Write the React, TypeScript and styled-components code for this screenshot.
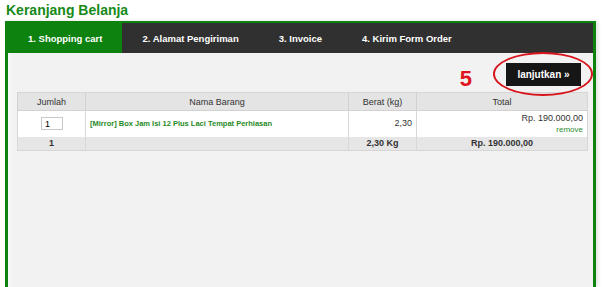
import React from 'react';
import styled, { createGlobalStyle } from 'styled-components';

const GlobalStyle = createGlobalStyle`
  html, body {
    margin: 0;
    padding: 0;
    background: #ffffff;
    overflow: hidden;
  }
  body {
    font-family: "Liberation Sans", Arial, sans-serif;
  }
`;

const tabs = ['1. Shopping cart', '2. Alamat Pengiriman', '3. Invoice', '4. Kirim Form Order'];

const cartItems = [
  { qty: 1, name: '[Mirror] Box Jam Isi 12 Plus Laci Tempat Perhiasan', weight: '2,30', total: 'Rp. 190.000,00' },
];

const App: React.FC = () => {
  return (
    <Page>
      <GlobalStyle />
      <Title>Keranjang Belanja</Title>
      <Frame>
        <TabBar>
          {tabs.map((tab, index) => (
            <Tab key={tab} active={index === 0}>{tab}</Tab>
          ))}
        </TabBar>
        <Content>
          <ActionRow>
            <StepNumber>5</StepNumber>
            <ButtonWrap>
              <NextButton>lanjutkan »</NextButton>
              <Highlight />
            </ButtonWrap>
          </ActionRow>
          <CartTable>
            <colgroup>
              <col style={{ width: 68 }} />
              <col style={{ width: 263 }} />
              <col style={{ width: 68 }} />
              <col style={{ width: 171 }} />
            </colgroup>
            <thead>
              <HeadRow>
                <Th>Jumlah</Th>
                <Th>Nama Barang</Th>
                <Th>Berat (kg)</Th>
                <Th>Total</Th>
              </HeadRow>
            </thead>
            <tbody>
              {cartItems.map((item, index) => (
                <BodyRow key={index}>
                  <Td align="center">
                    <QtyInput defaultValue={item.qty} />
                  </Td>
                  <Td>
                    <ProductLink>{item.name}</ProductLink>
                  </Td>
                  <Td align="right">{item.weight}</Td>
                  <Td align="right">
                    <Price>{item.total}</Price>
                    <RemoveLink>remove</RemoveLink>
                  </Td>
                </BodyRow>
              ))}
              <FootRow>
                <Td align="center" bold>1</Td>
                <Td />
                <Td align="center" bold>2,30 Kg</Td>
                <Td align="center" bold>Rp. 190.000,00</Td>
              </FootRow>
            </tbody>
          </CartTable>
        </Content>
      </Frame>
    </Page>
  );
};

export default App;

const Page = styled.div`
  padding: 1px 0 0 5px;
  width: 604px;
  height: 287px;
  box-sizing: border-box;
  display: flex;
  flex-direction: column;
  overflow: hidden;
`;

const Title = styled.h1`
  margin: 0 0 0 1px;
  font-size: 14px;
  line-height: 19px;
  height: 20px;
  font-weight: 700;
  color: #178a17;
`;

const Frame = styled.div`
  flex: 1;
  width: 591px;
  box-sizing: border-box;
  border: 3px solid #0e820e;
  border-top-width: 2px;
  border-bottom: none;
  display: flex;
  flex-direction: column;
  box-shadow: 2px 0 4px rgba(0, 0, 0, 0.12);
`;

const TabBar = styled.div`
  display: flex;
  height: 30px;
  flex-shrink: 0;
  background: #303030;
`;

const Tab = styled.div<{ active?: boolean }>`
  display: flex;
  align-items: center;
  padding: 0 20px;
  font-size: 9.5px;
  font-weight: 700;
  white-space: nowrap;
  color: #ffffff;
  background: ${(p) => (p.active ? '#0e820e' : 'transparent')};
`;

const Content = styled.div`
  flex: 1;
  background: #f2f2f2;
  padding: 10px 3px 0 6px;
  border-left: 3px solid #f7f7f7;
`;

const ActionRow = styled.div`
  display: flex;
  justify-content: flex-end;
  align-items: center;
  height: 23px;
  margin-right: 9px;
  margin-bottom: 6px;
`;

const StepNumber = styled.span`
  font-family: "Liberation Sans", Arial, sans-serif;
  font-size: 22px;
  font-weight: 700;
  color: #e0141c;
  margin-right: 34px;
  margin-top: 8px;
`;

const ButtonWrap = styled.div`
  position: relative;
`;

const NextButton = styled.div`
  width: 75px;
  height: 23px;
  background: #161616;
  color: #ffffff;
  font-size: 10px;
  font-weight: 700;
  display: flex;
  align-items: center;
  justify-content: center;
`;

const Highlight = styled.div`
  position: absolute;
  left: -13px;
  top: -11px;
  width: 96px;
  height: 40px;
  border: 2px solid #d8141c;
  border-radius: 50%;
  pointer-events: none;
`;

const CartTable = styled.table`
  width: 570px;
  border-collapse: collapse;
  table-layout: fixed;
  font-size: 9px;
  color: #333333;
  border: 1px solid #d6d6d6;
`;

const HeadRow = styled.tr`
  height: 18px;
  background: #e4e4e4;
`;

const BodyRow = styled.tr`
  height: 26px;
  background: #ffffff;
`;

const FootRow = styled.tr`
  height: 14px;
  background: #e6e6e6;
`;

const Th = styled.th`
  font-weight: 400;
  text-align: center;
  padding: 0 4px;
  border-left: 1px solid #d2d2d2;
  border-bottom: 1px solid #d2d2d2;
`;

const Td = styled.td<{ align?: 'left' | 'center' | 'right'; bold?: boolean }>`
  text-align: ${(p) => p.align || 'left'};
  font-weight: ${(p) => (p.bold ? 700 : 400)};
  padding: 0 4px;
  border-left: 1px solid #d8d8d8;
  vertical-align: middle;
  line-height: 11px;
`;

const QtyInput = styled.input`
  width: 22px;
  height: 13px;
  box-sizing: border-box;
  border: 1px solid #c8c8c8;
  font-size: 9px;
  font-family: "Liberation Sans", Arial, sans-serif;
  padding: 0 3px;
  display: block;
  margin: 0 auto 0 19px;
`;

const ProductLink = styled.span`
  color: #278a27;
  font-weight: 700;
  font-size: 7.5px;
`;

const Price = styled.div`
  font-size: 9px;
  color: #333333;
`;

const RemoveLink = styled.div`
  font-size: 8px;
  color: #2e8a2e;
`;
